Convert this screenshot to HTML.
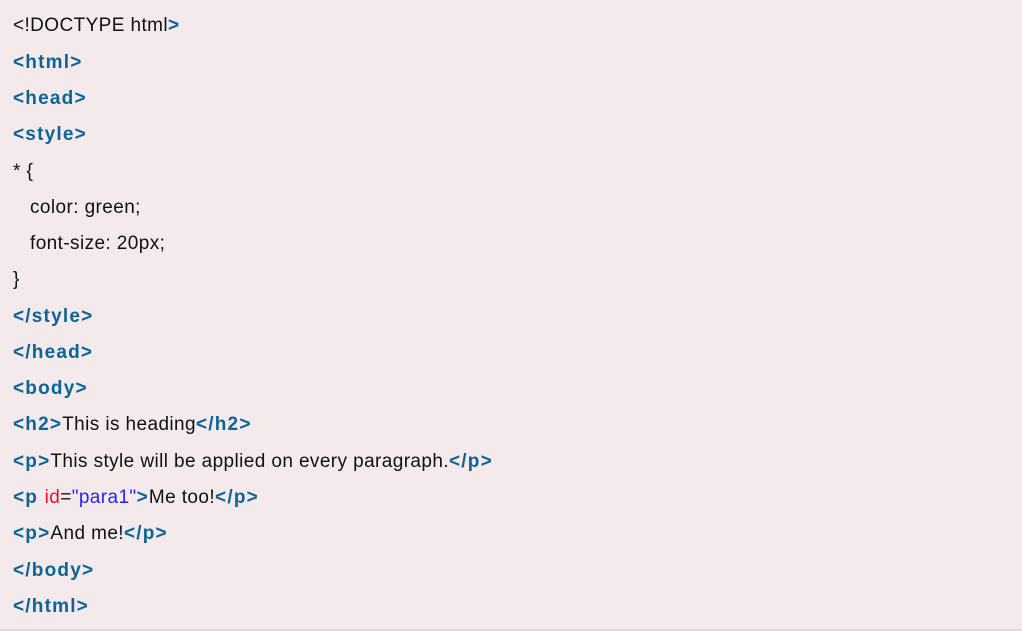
<!DOCTYPE html>
<html><head><style>
html,body{margin:0;padding:0;}
body{width:1022px;height:631px;background:#f4eaeb;font-family:"Liberation Sans",sans-serif;font-size:19px;letter-spacing:0.4px;color:#111;position:relative;overflow:hidden;}
.l{position:absolute;left:13px;white-space:pre;line-height:20px;margin-top:2px;}
.t{color:#0b6496;font-weight:bold;letter-spacing:1.2px;}
.a{color:#e8112d;}
.v{color:#2323ff;}
.b{position:absolute;left:0;right:0;bottom:0;height:2px;background:#dcdcd4;}
</style></head><body>
<div class="l" style="top:14px">&lt;!DOCTYPE html<span class="t">&gt;</span></div>
<div class="l t" style="top:51px">&lt;html&gt;</div>
<div class="l t" style="top:87px">&lt;head&gt;</div>
<div class="l t" style="top:123px">&lt;style&gt;</div>
<div class="l" style="top:160px">* {</div>
<div class="l" style="top:196px">   color: green;</div>
<div class="l" style="top:232px">   font-size: 20px;</div>
<div class="l" style="top:268px">}</div>
<div class="l t" style="top:305px">&lt;/style&gt;</div>
<div class="l t" style="top:341px">&lt;/head&gt;</div>
<div class="l t" style="top:377px">&lt;body&gt;</div>
<div class="l" style="top:413px"><span class="t">&lt;h2&gt;</span>This is heading<span class="t">&lt;/h2&gt;</span></div>
<div class="l" style="top:450px"><span class="t">&lt;p&gt;</span>This style will be applied on every paragraph.<span class="t">&lt;/p&gt;</span></div>
<div class="l" style="top:486px"><span class="t">&lt;p </span><span class="a">id</span>=<span class="v">"para1"</span><span class="t">&gt;</span>Me too!<span class="t">&lt;/p&gt;</span></div>
<div class="l" style="top:522px"><span class="t">&lt;p&gt;</span>And me!<span class="t">&lt;/p&gt;</span></div>
<div class="l t" style="top:559px">&lt;/body&gt;</div>
<div class="l t" style="top:595px">&lt;/html&gt;</div>
<div class="b"></div>
</body></html>
